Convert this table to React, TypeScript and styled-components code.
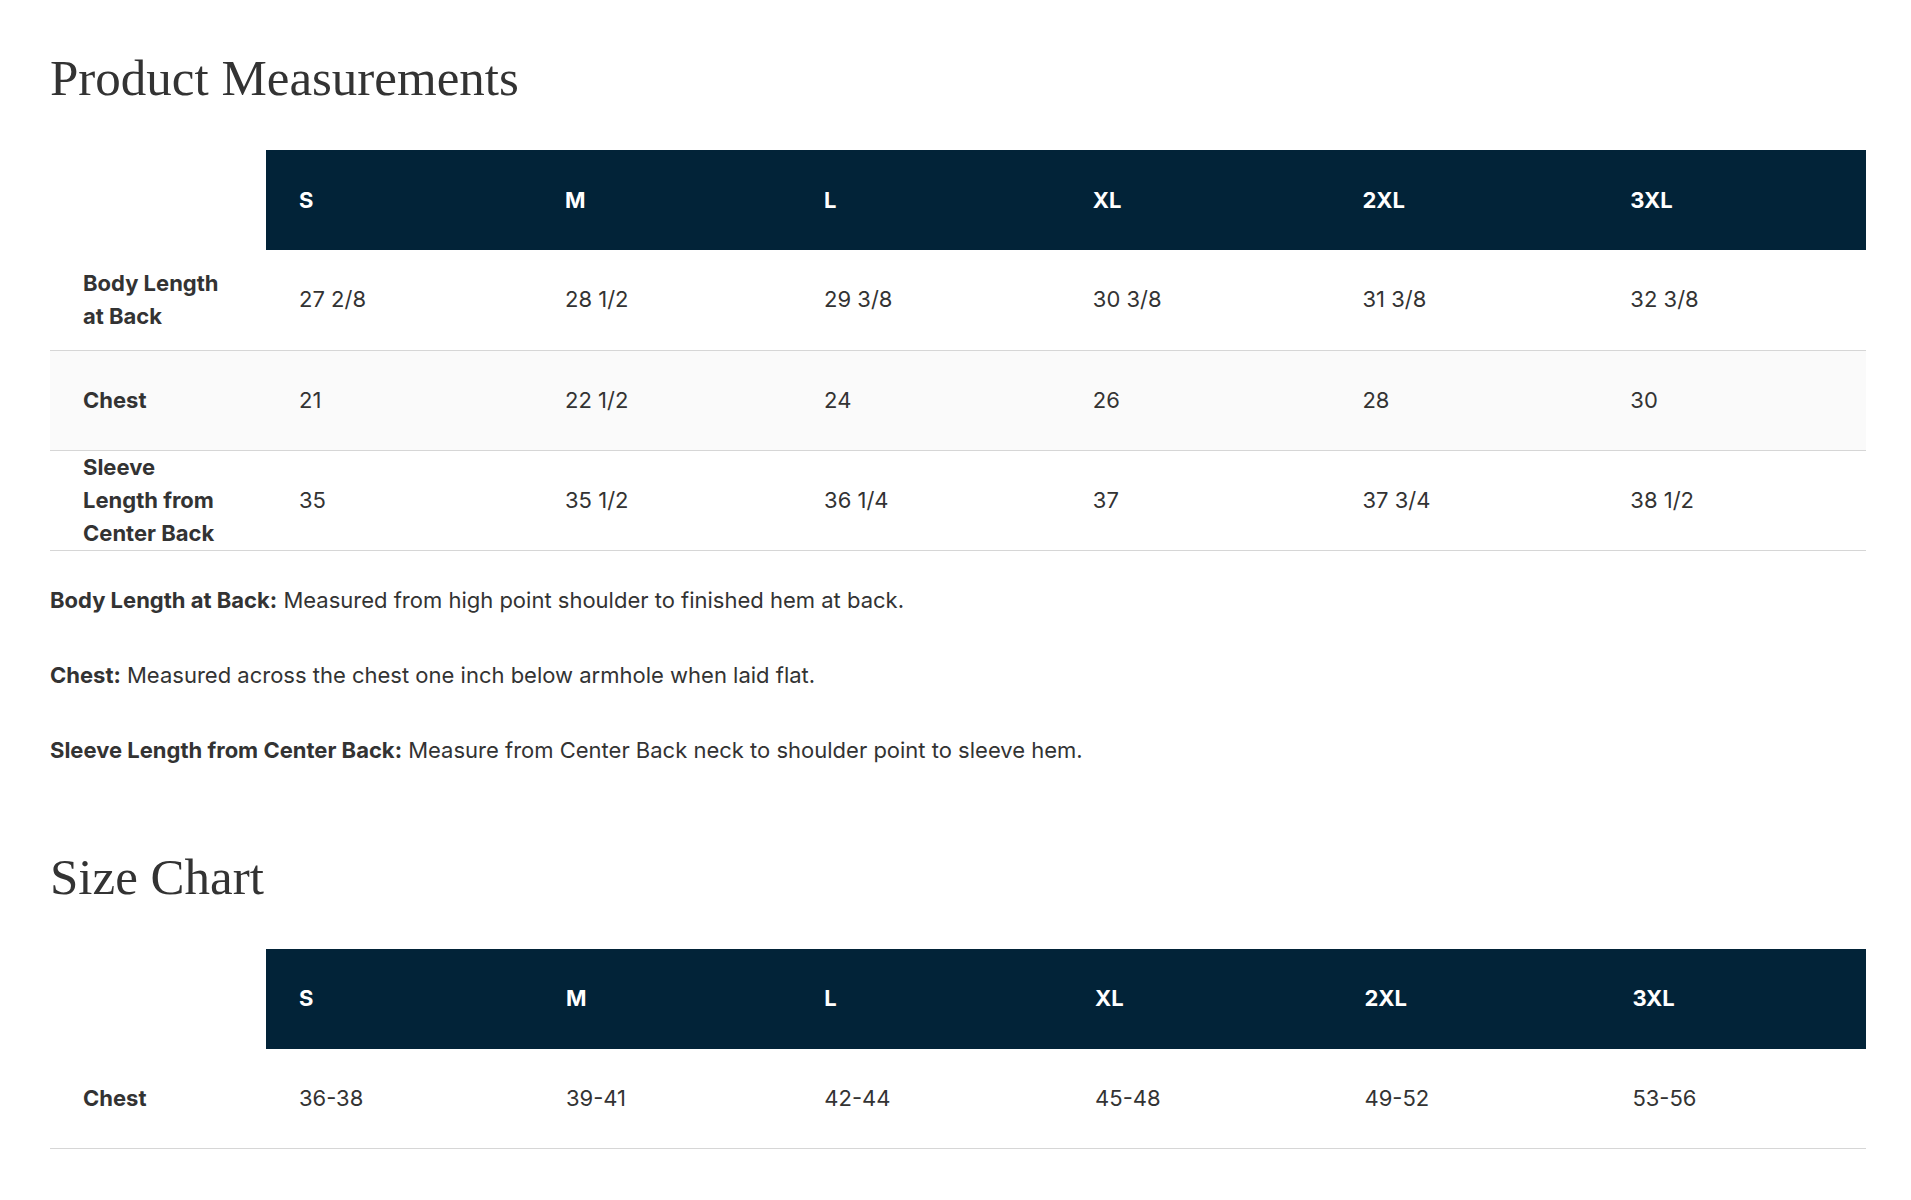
import React from "react";
import styled, { createGlobalStyle } from "styled-components";

const GlobalStyle = createGlobalStyle`
  body {
    margin: 0;
    background: #fff;
    font-family: Inter, "Noto Sans", "Liberation Sans", sans-serif;
    color: #333;
  }
`;

const Page = styled.div`
  padding: 48px 45px 60px 50px;
`;

const Section = styled.section<{ $spaced?: boolean }>`
  margin-top: ${(p) => (p.$spaced ? "80px" : "0")};
`;

const Title = styled.h2`
  margin: 0 0 42px;
  font-family: "Liberation Serif", "DejaVu Serif", serif;
  font-size: 51px;
  line-height: 60px;
  font-weight: 400;
  color: #333;
`;

const Table = styled.table`
  width: 100%;
  border-collapse: collapse;
  font-size: 22px;
  line-height: 33px;
`;

const HeadRow = styled.tr`
  height: 100px;
`;

const Corner = styled.th`
  width: 150px;
  padding: 0 33px;
  background: #fff;
`;

const SizeHead = styled.th`
  padding: 0 33px;
  background: #022338;
  color: #fff;
  font-weight: 700;
  text-align: left;
`;

const Row = styled.tr`
  height: 100px;
  border-bottom: 1px solid #d6d6d6;

  &:nth-child(even) {
    background: #fafafa;
  }
`;

const Label = styled.th`
  padding: 0 33px;
  text-align: left;
  font-weight: 700;
  color: #333;
`;

const Cell = styled.td`
  padding: 0 33px;
  color: #333;
  font-weight: 400;
`;

const Notes = styled.div`
  margin-top: 33px;
`;

const Note = styled.p`
  margin: 0 0 42px;
  font-size: 22px;
  line-height: 33px;
  color: #333;

  &:last-child {
    margin-bottom: 0;
  }

  strong {
    font-weight: 700;
  }
`;

const sizes = ["S", "M", "L", "XL", "2XL", "3XL"];

const measurements = [
  { label: "Body Length at Back", values: ["27 2/8", "28 1/2", "29 3/8", "30 3/8", "31 3/8", "32 3/8"] },
  { label: "Chest", values: ["21", "22 1/2", "24", "26", "28", "30"] },
  { label: "Sleeve Length from Center Back", values: ["35", "35 1/2", "36 1/4", "37", "37 3/4", "38 1/2"] },
];

const chart = [{ label: "Chest", values: ["36-38", "39-41", "42-44", "45-48", "49-52", "53-56"] }];

const notes = [
  { term: "Body Length at Back:", text: "Measured from high point shoulder to finished hem at back." },
  { term: "Chest:", text: "Measured across the chest one inch below armhole when laid flat." },
  { term: "Sleeve Length from Center Back:", text: "Measure from Center Back neck to shoulder point to sleeve hem." },
];

type RowData = { label: string; values: string[] };

const SizeTable = ({ rows }: { rows: RowData[] }) => (
  <Table>
    <thead>
      <HeadRow>
        <Corner />
        {sizes.map((s) => (
          <SizeHead key={s}>{s}</SizeHead>
        ))}
      </HeadRow>
    </thead>
    <tbody>
      {rows.map((row) => (
        <Row key={row.label}>
          <Label>{row.label}</Label>
          {row.values.map((v, i) => (
            <Cell key={i}>{v}</Cell>
          ))}
        </Row>
      ))}
    </tbody>
  </Table>
);

const App = () => {
  return (
    <>
      <GlobalStyle />
      <Page>
        <Section>
          <Title>Product Measurements</Title>
          <SizeTable rows={measurements} />
          <Notes>
            {notes.map((n) => (
              <Note key={n.term}>
                <strong>{n.term}</strong> {n.text}
              </Note>
            ))}
          </Notes>
        </Section>
        <Section $spaced>
          <Title>Size Chart</Title>
          <SizeTable rows={chart} />
        </Section>
      </Page>
    </>
  );
};

export default App;
